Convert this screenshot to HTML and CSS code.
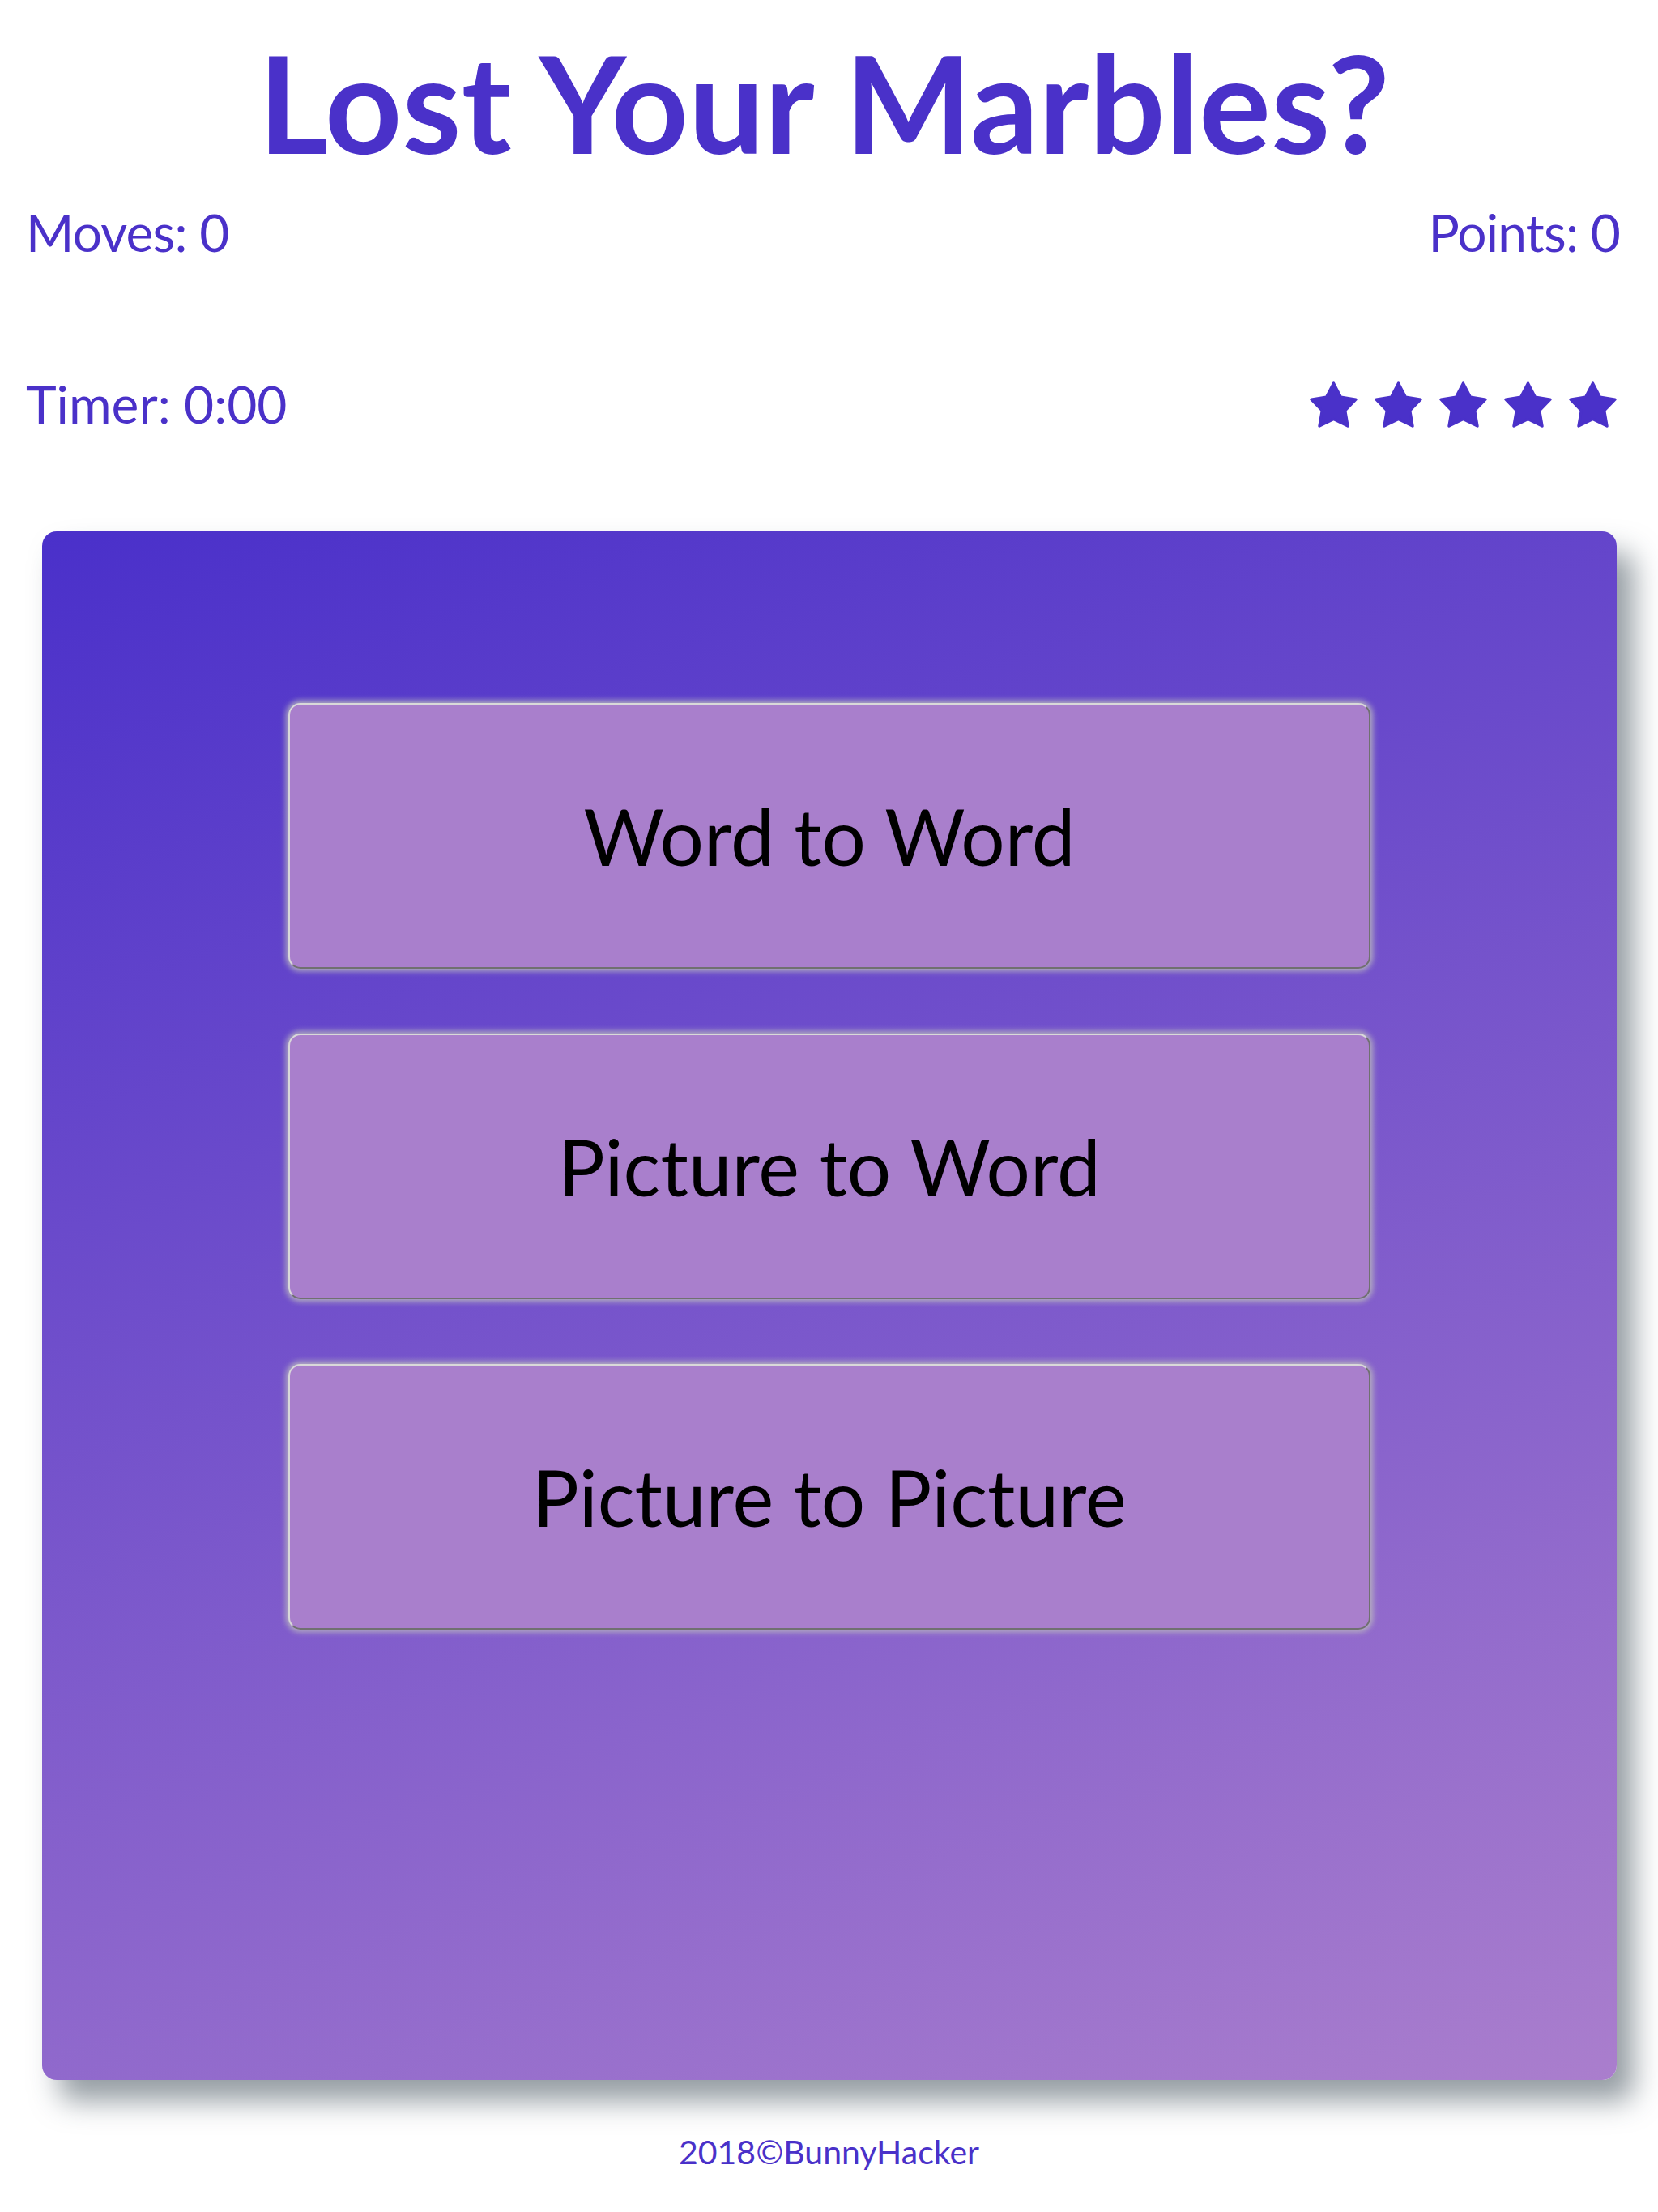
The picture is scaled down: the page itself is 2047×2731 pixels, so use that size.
FILE: index.html
```html
<!DOCTYPE html>
<html lang="en">
<head>
<meta charset="utf-8">
<title>Lost Your Marbles?</title>
<link rel="stylesheet" href="styles.css">
</head>
<body>
<header class="header">
  <h1 class="title">Lost Your Marbles?</h1>
</header>
<section class="score-panel">
  <div class="score-row">
    <span class="stat stat-tight">Moves: 0</span>
    <span class="stat stat-tight">Points: 0</span>
  </div>
  <div class="score-row timer-row">
    <span class="stat">Timer: 0:00</span>
    <ul class="stars">
      <li class="star"><svg viewBox="0 0 178 172"><polygon points="89,6 116,58 172,67 132,108 142,166 89,140 36,166 46,108 6,67 62,58"/></svg></li>
      <li class="star"><svg viewBox="0 0 178 172"><polygon points="89,6 116,58 172,67 132,108 142,166 89,140 36,166 46,108 6,67 62,58"/></svg></li>
      <li class="star"><svg viewBox="0 0 178 172"><polygon points="89,6 116,58 172,67 132,108 142,166 89,140 36,166 46,108 6,67 62,58"/></svg></li>
      <li class="star"><svg viewBox="0 0 178 172"><polygon points="89,6 116,58 172,67 132,108 142,166 89,140 36,166 46,108 6,67 62,58"/></svg></li>
      <li class="star"><svg viewBox="0 0 178 172"><polygon points="89,6 116,58 172,67 132,108 142,166 89,140 36,166 46,108 6,67 62,58"/></svg></li>
    </ul>
  </div>
</section>
<main class="deck">
  <button class="mode">Word to Word</button>
  <button class="mode">Picture to Word</button>
  <button class="mode">Picture to Picture</button>
</main>
<footer class="footer">2018©BunnyHacker</footer>
</body>
</html>
```

FILE: styles.css
```css
html, body {
  margin: 0;
  padding: 0;
  background: #ffffff;
}

body {
  font-family: Lato, "Open Sans", "Liberation Sans", sans-serif;
  color: #4a31c9;
}

.header {
  padding: 26px 12px 0 0;
}

.title {
  margin: 0;
  text-align: center;
  font-size: 166px;
  font-weight: 700;
  line-height: 1.2;
  letter-spacing: 0.2px;
  color: #4a31c9;
}

.score-panel {
  padding: 24px 47px 0 32px;
}

.score-row {
  display: flex;
  justify-content: space-between;
  align-items: center;
}

.timer-row {
  margin-top: 135px;
  padding-right: 4px;
}

.stat {
  font-size: 64px;
  line-height: 1.2;
}

.stat-tight {
  letter-spacing: -0.8px;
}

.stars {
  list-style: none;
  margin: 0;
  padding: 0;
  display: flex;
  gap: 21px;
}

.star {
  width: 59px;
  height: 57px;
  display: block;
}

.star svg {
  width: 59px;
  height: 57px;
  display: block;
}

.star polygon {
  fill: #4a31c9;
  stroke: #4a31c9;
  stroke-width: 10;
  stroke-linejoin: round;
}

.deck {
  margin: 118px 0 0 52px;
  width: 1944px;
  height: 1912px;
  box-sizing: border-box;
  padding-top: 212px;
  border-radius: 18px;
  background: linear-gradient(160deg, #4a30ca 0%, #aa7ecd 100%);
  box-shadow: 21px 26px 35px 0 rgba(46, 61, 73, 0.5);
  display: flex;
  flex-direction: column;
  align-items: center;
  gap: 80px;
}

.mode {
  width: 1336px;
  height: 328px;
  box-sizing: border-box;
  background: #a97fcc;
  border: 2px solid;
  border-color: #d9d9d9 #707070 #707070 #d9d9d9;
  border-radius: 15px;
  box-shadow: 0 0 7px 3px rgba(190, 190, 190, 0.85);
  font-family: Lato, "Open Sans", "Liberation Sans", sans-serif;
  font-size: 96px;
  color: #000000;
  padding: 0;
  cursor: pointer;
}

.footer {
  margin-top: 64px;
  text-align: center;
  font-size: 41px;
  line-height: 1.2;
  color: #4a31c9;
}
```
